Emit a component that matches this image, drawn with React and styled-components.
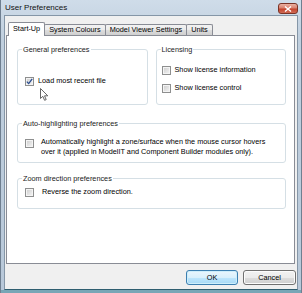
import React from 'react';
import styled, { createGlobalStyle } from 'styled-components';

const font = `"Liberation Sans", Arial, sans-serif`;

const GlobalStyle = createGlobalStyle`
  html, body {
    margin: 0;
    padding: 0;
    background: #bccbdb;
  }
  * {
    box-sizing: border-box;
  }
`;

const Window = styled.div`
  width: 302px;
  height: 293px;
  display: flex;
  flex-direction: column;
  padding: 0 3px 3px 3px;
  border-left: 1px solid #6f7f90;
  border-right: 1px solid #6f7f90;
  background: linear-gradient(#78a6b6, #78a6b6) bottom / 100% 3px no-repeat,
    linear-gradient(#cfdce9, #c0cfde 40px, #b8c8d9);
  font-family: ${font};
  color: #000;
`;

const TitleBar = styled.div`
  height: 15px;
  display: flex;
  align-items: flex-start;
  justify-content: space-between;
  padding-left: 1px;
`;

const Title = styled.span`
  font-size: 8px;
  line-height: 16px;
  color: #111;
`;

const CloseButton = styled.div`
  margin-top: 3px;
  width: 20px;
  height: 11px;
  border: 1px solid #7a3326;
  border-radius: 3px;
  background: linear-gradient(#eab0a2, #d9826f 45%, #c4432c 55%, #d06a55);
  display: flex;
  align-items: center;
  justify-content: center;
`;

const Client = styled.div`
  flex: 1;
  display: flex;
  flex-direction: column;
  background: #f0f0f0;
  border: 1px solid #8596a7;
  border-bottom-color: #2f5e70;
  padding: 6px 2px 0 1px;
`;

const TabRow = styled.div`
  display: flex;
  align-items: flex-end;
  padding-left: 2px;
  position: relative;
  z-index: 1;
`;

const Tab = styled.div`
  height: ${p => (p.$active ? 14 : 11)}px;
  margin-bottom: ${p => (p.$active ? -1 : 0)}px;
  margin-left: -1px;
  padding: 0 4px;
  border: 1px solid #898c95;
  border-bottom: none;
  border-radius: 2px 2px 0 0;
  background: ${p =>
    p.$active ? '#fff' : 'linear-gradient(#f2f2f2, #ebebeb 50%, #dddddd 51%, #cfcfcf)'};
  font-size: 7.3px;
  line-height: ${p => (p.$active ? 12 : 10)}px;
  white-space: nowrap;
  position: relative;
  z-index: ${p => (p.$active ? 2 : 1)};

  &:first-child {
    margin-left: 0;
  }
`;

const Panel = styled.div`
  flex: 1;
  position: relative;
  background: #fff;
  border: 1px solid #898c95;
  padding: 9px 8px 0 10px;
  display: flex;
  flex-direction: column;
`;

const GroupRow = styled.div`
  display: grid;
  grid-template-columns: 1fr 1fr;
  gap: 8px;
`;

const Group = styled.fieldset`
  margin: ${p => p.$mt || 0}px 0 0 0;
  min-width: 0;
  height: ${p => p.$h}px;
  padding: 0;
  border: 1px solid #d5dfe5;
  border-radius: 3px;
`;

const Legend = styled.legend`
  margin-left: 4px;
  padding: 0 1px;
  font-size: 7.3px;
  line-height: 9px;
  color: #1a1a1a;
`;

const GroupBody = styled.div`
  display: flex;
  flex-direction: column;
  gap: 8px;
  padding: ${p => p.$pad};
`;

const Row = styled.label`
  display: flex;
  align-items: ${p => (p.$top ? 'flex-start' : 'center')};
  gap: ${p => p.$gap || 4}px;
  font-size: 7.3px;
  line-height: 10px;
  white-space: nowrap;
`;

const Box = styled.span`
  flex: none;
  width: 9px;
  height: 9px;
  margin-top: ${p => (p.$top ? 2 : 0)}px;
  border: 1px solid #8e8f8f;
  box-shadow: inset 0 0 0 1px #f4f4f4;
  background: linear-gradient(135deg, #cbcbcb, #f6f6f6);
  display: flex;
  align-items: center;
  justify-content: center;
`;

const ButtonRow = styled.div`
  display: flex;
  justify-content: flex-end;
  gap: 5px;
  margin: 6px -1px 4px 0;
`;

const Button = styled.div`
  width: ${p => p.$w}px;
  height: 15px;
  border: 1px solid ${p => (p.$default ? '#3c7fb1' : '#707070')};
  border-radius: 3px;
  background: ${p =>
    p.$default
      ? 'linear-gradient(#eaf6fd, #d9f0fc 50%, #bee6fd 51%, #a7d9f5)'
      : 'linear-gradient(#f2f2f2, #ebebeb 50%, #dddddd 51%, #cfcfcf)'};
  box-shadow: inset 0 0 0 1px ${p => (p.$default ? '#cdeefb' : '#fcfcfc')};
  font-size: 7.3px;
  line-height: 13px;
  text-align: center;
`;

const Pointer = styled.svg`
  position: absolute;
  left: 33px;
  top: 52px;
  pointer-events: none;
`;

const Checkbox = ({ checked, top }) => (
  <Box $top={top}>
    {checked && (
      <svg width="7" height="7" viewBox="0 0 7 7">
        <path d="M0.8 3.6 L2.7 5.6 L6.2 0.9" fill="none" stroke="#2a4d8f" strokeWidth="1.3" />
      </svg>
    )}
  </Box>
);

const tabs = ['Start-Up', 'System Colours', 'Model Viewer Settings', 'Units'];

export default function App() {
  return (
    <>
      <GlobalStyle />
      <Window>
        <TitleBar>
          <Title>User Preferences</Title>
          <CloseButton>
            <svg width="8" height="6" viewBox="0 0 8 6">
              <path d="M1 0.5 L7 5.5 M7 0.5 L1 5.5" stroke="#fff" strokeWidth="1.4" />
            </svg>
          </CloseButton>
        </TitleBar>
        <Client>
          <TabRow>
            {tabs.map((t, i) => (
              <Tab key={t} $active={i === 0}>{t}</Tab>
            ))}
          </TabRow>
          <Panel>
            <GroupRow>
              <Group $h={60}>
                <Legend>General preferences</Legend>
                <GroupBody $pad="22px 0 0 7px">
                  <Row>
                    <Checkbox checked />
                    Load most recent file
                  </Row>
                </GroupBody>
              </Group>
              <Group $h={60}>
                <Legend>Licensing</Legend>
                <GroupBody $pad="11px 0 0 5px">
                  <Row>
                    <Checkbox />
                    Show license information
                  </Row>
                  <Row>
                    <Checkbox />
                    Show license control
                  </Row>
                </GroupBody>
              </Group>
            </GroupRow>
            <Group $h={44} $mt={14}>
              <Legend>Auto-highlighting preferences</Legend>
              <GroupBody $pad="9px 0 0 7px">
                <Row $top $gap={7}>
                  <Checkbox top />
                  <span>
                    Automatically highlight a zone/surface when the mouse cursor hovers
                    <br />
                    over it (applied in ModelIT and Component Builder modules only).
                  </span>
                </Row>
              </GroupBody>
            </Group>
            <Group $h={35} $mt={11}>
              <Legend>Zoom direction preferences</Legend>
              <GroupBody $pad="4px 0 0 7px">
                <Row $gap={8}>
                  <Checkbox />
                  Reverse the zoom direction.
                </Row>
              </GroupBody>
            </Group>
            <Pointer width="9" height="13" viewBox="0 0 9 13">
              <path
                d="M0.5 0.5 L0.5 10.5 L2.8 8.3 L4.6 12.3 L6.2 11.6 L4.5 7.8 L7.8 7.8 Z"
                fill="#fff"
                stroke="#555"
                strokeWidth="0.9"
                strokeLinejoin="round"
              />
            </Pointer>
          </Panel>
          <ButtonRow>
            <Button $w={52} $default>OK</Button>
            <Button $w={53}>Cancel</Button>
          </ButtonRow>
        </Client>
      </Window>
    </>
  );
}
